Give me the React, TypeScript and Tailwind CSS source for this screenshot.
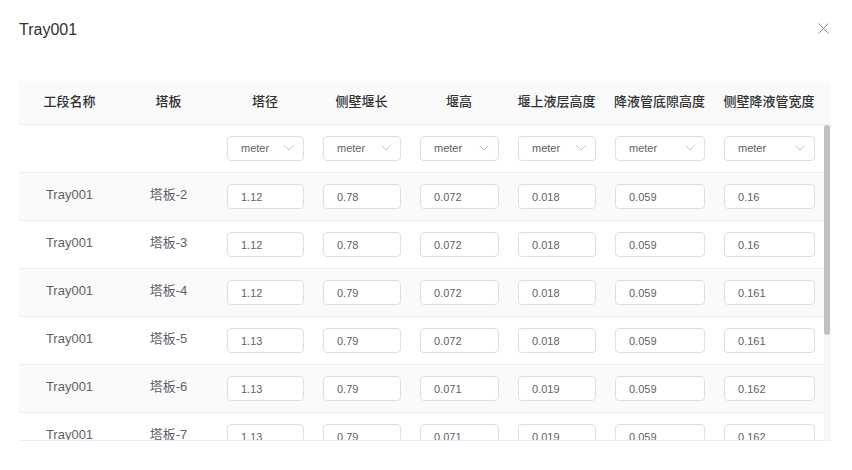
import { useState } from "react";

const cols = [
  { title: "工段名称", w: "w-[101px]" },
  { title: "塔板", w: "w-[97px]" },
  { title: "塔径", w: "w-[96px]" },
  { title: "侧壁堰长", w: "w-[97px]" },
  { title: "堰高", w: "w-[98px]" },
  { title: "堰上液层高度", w: "w-[97px]" },
  { title: "降液管底隙高度", w: "w-[109px]" },
  { title: "侧壁降液管宽度", w: "w-[110px]" },
];

const rows = [
  ["1.12", "0.78", "0.072", "0.018", "0.059", "0.16"],
  ["1.12", "0.78", "0.072", "0.018", "0.059", "0.16"],
  ["1.12", "0.79", "0.072", "0.018", "0.059", "0.161"],
  ["1.13", "0.79", "0.072", "0.018", "0.059", "0.161"],
  ["1.13", "0.79", "0.071", "0.019", "0.059", "0.162"],
  ["1.13", "0.79", "0.071", "0.019", "0.059", "0.162"],
  ["1.13", "0.79", "0.071", "0.019", "0.059", "0.162"],
  ["1.13", "0.79", "0.071", "0.019", "0.059", "0.163"],
];

function Chevron() {
  return (
    <svg width="10" height="6" viewBox="0 0 10 6" fill="none">
      <path d="M0.5 0.5 L5 5 L9.5 0.5" stroke="#c0c4cc" strokeWidth="1" />
    </svg>
  );
}

function UnitSelect() {
  return (
    <div className="h-[25px] w-full flex items-center justify-between pl-[13px] pr-[9px] border border-[#dcdfe6] rounded-[4px] bg-white text-[11px] text-[#606266]">
      <span>meter</span>
      <Chevron />
    </div>
  );
}

function NumInput({ value }: { value: string }) {
  const [v, setV] = useState(value);
  return (
    <input
      value={v}
      onChange={(e) => setV(e.target.value)}
      className="h-[25px] w-full pl-[13px] pr-2 pt-[2px] border border-[#dcdfe6] rounded-[4px] bg-white text-[11px] text-[#606266] outline-none"
    />
  );
}

function App() {
  return (
    <div
      className="w-[852px] h-[470px] bg-white overflow-hidden"
      style={{ fontFamily: '"Liberation Sans", "Noto Sans CJK SC", sans-serif' }}
    >
      <div className="flex items-start justify-between pt-[20px] pl-[19px] pr-[23px]">
        <span className="text-[16px] leading-[20px] text-[#303133]">Tray001</span>
        <svg width="11" height="11" viewBox="0 0 11 11" className="mt-[3px]">
          <path d="M0.5 0.5 L10.5 10.5 M10.5 0.5 L0.5 10.5" stroke="#909399" strokeWidth="1" />
        </svg>
      </div>

      <div className="mt-[41px] mx-[19px] w-[812px]">
        <div className="flex h-[44px] bg-[#fafafa] border-b border-[#ebeef5]">
          {cols.map((c) => (
            <div
              key={c.title}
              className={`${c.w} shrink-0 flex items-center justify-center pb-[2px] text-[13px] font-medium text-[#303133]`}
            >
              {c.title}
            </div>
          ))}
        </div>

        <div className="flex h-[316px] border-b border-[#ebeef5]">
          <div className="w-[805px] h-[315px] overflow-hidden">
            <div className="flex h-[48px] border-b border-[#ebeef5] bg-white">
              <div className="w-[101px] shrink-0" />
              <div className="w-[97px] shrink-0" />
              {cols.slice(2).map((c) => (
                <div key={c.title} className={`${c.w} shrink-0 flex items-center pl-[10px] pr-[9px] pb-[1px]`}>
                  <UnitSelect />
                </div>
              ))}
            </div>

            {rows.map((r, i) => (
              <div
                key={i}
                className={`flex h-[48px] border-b border-[#ebeef5] ${i % 2 === 0 ? "bg-[#fafafa]" : "bg-white"}`}
              >
                <div className="w-[101px] shrink-0 flex items-center justify-center pb-[3px] text-[13px] text-[#606266]">
                  Tray001
                </div>
                <div className="w-[97px] shrink-0 flex items-center justify-center pb-[3px] text-[13px] text-[#606266]">
                  塔板-{i + 2}
                </div>
                {r.map((val, j) => (
                  <div key={j} className={`${cols[j + 2].w} shrink-0 flex items-center pl-[10px] pr-[9px] pb-[1px]`}>
                    <NumInput value={val} />
                  </div>
                ))}
              </div>
            ))}
          </div>

          <div className="w-[7px] h-[315px] bg-[#f7f7f7] flex flex-col">
            <div className="w-[6px] h-[210px] rounded-[3px] bg-[#c1c1c1]" />
          </div>
        </div>
      </div>
    </div>
  );
}

export default App;
